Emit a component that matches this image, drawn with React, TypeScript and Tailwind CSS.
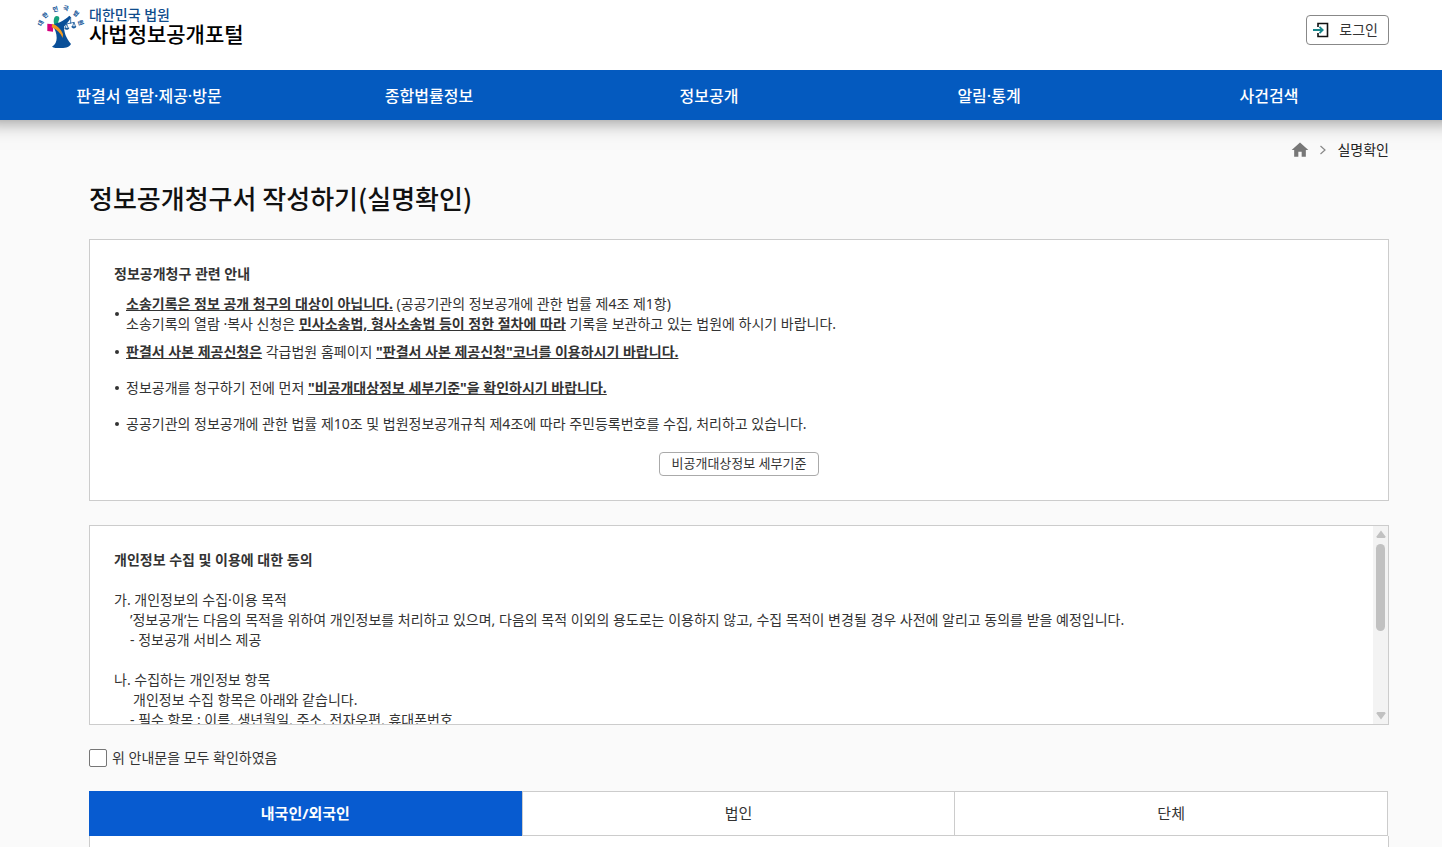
import React, { useState } from 'react';
import { MdHome } from 'react-icons/md';

const menus = ['판결서 열람·제공·방문', '종합법률정보', '정보공개', '알림·통계', '사건검색'];

const tabs = ['내국인/외국인', '법인', '단체'];

function CourtEmblem() {
  return (
    <svg viewBox="0 0 150 150" className="h-[50px] w-[50px] overflow-visible" aria-hidden="true">
      <g fill="#1d5c9c" fontSize="18" fontWeight="900" textAnchor="middle">
        <text transform="translate(20 66) rotate(-65)">대</text>
        <text transform="translate(32 45) rotate(-40)">한</text>
        <text transform="translate(60 28) rotate(-15)">민</text>
        <text transform="translate(88 25) rotate(12)">국</text>
        <text transform="translate(116 40) rotate(40)">법</text>
        <text transform="translate(128 64) rotate(70)">원</text>
      </g>
      <path d="M56 45c5-5 14-3 14 4 0 5-3 8-4 15l-10 6c-4-7-4-18 0-25z" fill="#16a07c" />
      <path
        d="M50 72c7-9 15-8 23-12 10-5 18-11 27-19l5 5c-5 11-13 20-21 28 0 16 6 34 21 52-6 12-20 12-33 12-11 0-18 0-24-4 10-6 14-15 14-26 0-13-4-25-12-36z"
        fill="#0a4f98"
      />
      <path d="M34 65l18 2-1 22-17-2z" fill="#d5007f" />
      <path d="M49 65c14 5 27 16 32 32l-1 11C74 93 62 82 47 76z" fill="#f39a1e" />
      <path
        d="M104 45v20M90 66l25-5M92 66l-5 13M92 66l5 13M114 61l-5 14M114 61l5 14"
        fill="none"
        stroke="#1d5c9c"
        strokeWidth="2.5"
      />
      <path d="M85 77h15c-1 8-14 9-15 0zM106 73h15c-1 8-14 9-15 0z" fill="#1d5c9c" />
    </svg>
  );
}

function LoginIcon() {
  return (
    <svg viewBox="0 0 16 16" className="h-4 w-4" fill="none" aria-hidden="true">
      <path d="M5 5V1.500h9.500v13H5V11" stroke="#111" strokeWidth="1.600" />
      <path d="M0 8h9M6.500 4.800L9.700 8l-3.200 3.200" stroke="#17858a" strokeWidth="1.800" />
    </svg>
  );
}

function Notice({ children }: { children: React.ReactNode }) {
  return (
    <li className="flex min-h-9 items-center">
      <span className="ml-px mr-[7px] h-1 w-1 shrink-0 rounded-full bg-[#333]" />
      <div>{children}</div>
    </li>
  );
}

function ScrollBar() {
  return (
    <div className="flex w-[15px] shrink-0 flex-col items-center bg-[#f3f3f3] py-1" aria-hidden="true">
      <svg viewBox="0 0 10 8" className="h-2 w-2.5 shrink-0" fill="#c1c1c1">
        <path d="M5 0.500L9.500 6.500Q9.500 8 8.500 8H1.500Q0.500 8 0.500 6.500z" />
      </svg>
      <div className="mt-1.5 h-[87px] w-[9px] rounded-full bg-[#c1c1c1]" />
      <svg viewBox="0 0 10 8" className="mt-auto h-2 w-2.5 shrink-0" fill="#c1c1c1">
        <path d="M5 7.500L9.500 1.500Q9.500 0 8.500 0H1.500Q0.500 0 0.500 1.500z" />
      </svg>
    </div>
  );
}

export default function App() {
  const [agreed, setAgreed] = useState(false);
  const [activeTab, setActiveTab] = useState(0);

  return (
    <div className="flex min-h-screen flex-col bg-[#fafafa] font-['Noto_Sans','Noto_Sans_CJK_KR',sans-serif] text-sm/5 text-[#333]">
      <header className="shadow-[0_-20px_20px_20px_rgba(0,0,0,0.5)]">
        <div className="flex h-[70px] items-start justify-between bg-white pl-9 pr-[53px]">
          <a href="#" className="flex gap-[3px] pt-0.5">
            <CourtEmblem />
            <span className="pt-1 font-medium">
              <span className="block text-sm/[18px] text-[#0f4c8c]">대한민국 법원</span>
              <span className="block text-[21px]/5 text-black">사법정보공개포털</span>
            </span>
          </a>
          <button className="mt-[15px] flex h-[30px] items-center gap-2.5 rounded border border-[#888] bg-white pl-1.5 pr-2.5">
            <LoginIcon />
            로그인
          </button>
        </div>
        <nav className="grid h-[50px] grid-cols-5 items-center bg-[#045abf] pl-[9px] pr-[33px] pt-px text-center text-base font-medium text-white">
          {menus.map((menu) => (
            <a key={menu} href="#">
              {menu}
            </a>
          ))}
        </nav>
      </header>

      <main className="flex flex-1 flex-col pl-[89px] pr-[53px] pt-5">
        <div className="flex h-5 items-center justify-end text-[#222]">
          <a href="#" aria-label="홈">
            <MdHome className="h-5 w-5 text-[#777]" />
          </a>
          <svg viewBox="0 0 6 10" className="ml-2.5 mr-[11px] h-2.5 w-1.5" fill="none" aria-hidden="true">
            <path d="M0.500 1L5 5L0.500 9" stroke="#888" strokeWidth="1.200" />
          </svg>
          <span>실명확인</span>
        </div>

        <h1 className="mb-[21px] mt-[18px] font-['Noto_Sans_CJK_KR',sans-serif] text-[26px]/10 font-medium text-[#111]">
          정보공개청구서 작성하기(실명확인)
        </h1>

        <section className="border border-[#ccc] bg-white p-6">
          <h2 className="font-bold">정보공개청구 관련 안내</h2>
          <ul className="mt-2.5">
            <Notice>
              <b className="underline">소송기록은 정보 공개 청구의 대상이 아닙니다.</b> (공공기관의 정보공개에 관한 법률 제4조 제1항)
              <br />
              소송기록의 열람 ·복사 신청은 <b className="underline">민사소송법, 형사소송법 등이 정한 절차에 따라</b> 기록을 보관하고 있는
              법원에 하시기 바랍니다.
            </Notice>
            <Notice>
              <b className="underline">판결서 사본 제공신청은</b> 각급법원 홈페이지{' '}
              <b className="underline">"판결서 사본 제공신청"코너를 이용하시기 바랍니다.</b>
            </Notice>
            <Notice>
              정보공개를 청구하기 전에 먼저 <b className="underline">"비공개대상정보 세부기준"을 확인하시기 바랍니다.</b>
            </Notice>
            <Notice>공공기관의 정보공개에 관한 법률 제10조 및 법원정보공개규칙 제4조에 따라 주민등록번호를 수집, 처리하고 있습니다.</Notice>
          </ul>
          <div className="mt-2.5 flex justify-center">
            <button className="h-6 rounded border border-[#aaa] bg-white px-3 pb-0.5 text-[13px]/5">비공개대상정보 세부기준</button>
          </div>
        </section>

        <section className="mt-6 flex h-[200px] border border-[#ccc] bg-white">
          <div className="flex-1 overflow-hidden px-6 pt-6">
            <h2 className="font-bold">개인정보 수집 및 이용에 대한 동의</h2>
            <p className="mt-5">가. 개인정보의 수집·이용 목적</p>
            <p className="pl-4">
              ’정보공개’는 다음의 목적을 위하여 개인정보를 처리하고 있으며, 다음의 목적 이외의 용도로는 이용하지 않고, 수집 목적이 변경될 경우
              사전에 알리고 동의를 받을 예정입니다.
            </p>
            <p className="pl-4">- 정보공개 서비스 제공</p>
            <p className="mt-5">나. 수집하는 개인정보 항목</p>
            <p className="pl-[19px]">개인정보 수집 항목은 아래와 같습니다.</p>
            <p className="pl-4">- 필수 항목 : 이름, 생년월일, 주소, 전자우편, 휴대폰번호</p>
          </div>
          <ScrollBar />
        </section>

        <label className="mt-6 flex h-[18px] items-center gap-[5px] self-start">
          <input
            type="checkbox"
            checked={agreed}
            onChange={(e) => setAgreed(e.target.checked)}
            className="h-[18px] w-[18px] appearance-none rounded-xs border border-[#767676] bg-white checked:bg-[#075bd0]"
          />
          위 안내문을 모두 확인하였음
        </label>

        <div className="mr-px mt-6 grid h-[45px] grid-cols-3 border-r border-[#ccc] text-[15px]">
          {tabs.map((tab, i) => (
            <button
              key={tab}
              onClick={() => setActiveTab(i)}
              className={
                activeTab === i
                  ? 'bg-[#075bd0] pb-0.5 font-bold text-white'
                  : 'border-l border-t border-b border-[#ccc] bg-white pb-0.5'
              }
            >
              {tab}
            </button>
          ))}
        </div>
        <div className="flex-1 border-x border-[#ccc] bg-white" />
      </main>
    </div>
  );
}
